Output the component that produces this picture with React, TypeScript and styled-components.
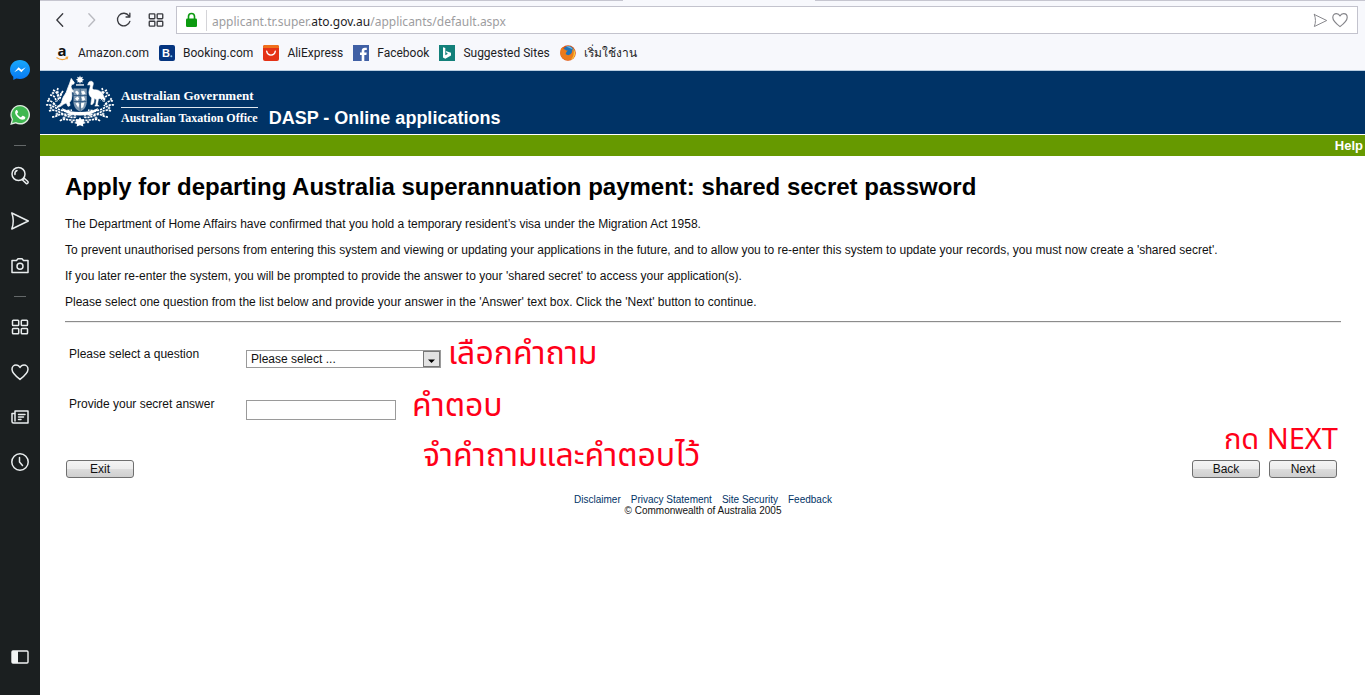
import React from 'react';
import styled, { createGlobalStyle } from 'styled-components';

const GlobalStyle = createGlobalStyle`
  *, *::before, *::after { box-sizing: border-box; }
  body { margin: 0; background: #fff; }
  h1, p { margin: 0; }
  a { color: inherit; text-decoration: none; }
  button { font: inherit; color: inherit; }
`;

const uiFont = `"Noto Sans", "Open Sans", sans-serif`;
const bookmarkFont = `Roboto, "Noto Sans", sans-serif`;
const pageFont = `"Liberation Sans", Arial, sans-serif`;

/* ---------- Frame ---------- */

const Frame = styled.div`
  display: flex;
  min-height: 100vh;
`;

const Sidebar = styled.nav`
  flex: 0 0 40px;
  display: flex;
  flex-direction: column;
  align-items: center;
  padding: 47px 0 16px;
  background: #1b1f20;
  color: #e9edee;
`;

const SideButton = styled.button<{ $last?: boolean }>`
  display: grid;
  place-items: center;
  width: 40px;
  height: 45px;
  padding: 0;
  border: 0;
  background: none;
  margin-top: ${(p) => (p.$last ? 'auto' : '0')};
  svg { display: block; }
`;

const SideDivider = styled.div`
  display: flex;
  align-items: center;
  height: 16px;
  &::before {
    content: '';
    width: 12px;
    height: 1px;
    background: #646869;
  }
`;

const Main = styled.div`
  flex: 1;
  min-width: 0;
`;

/* ---------- Browser bars ---------- */

const TabEdge = styled.div`
  display: flex;
  justify-content: space-between;
  height: 1px;
  background: #f7f8fc;
`;

const TabLine = styled.div<{ $width: string }>`
  width: ${(p) => p.$width};
  background: #c6c6d0;
`;

const Chrome = styled.header`
  background: #f7f8fc;
  border-bottom: 1px solid #b9cde0;
  font-family: ${uiFont};
  font-size: 12px;
  color: #1d1d1f;
`;

const Toolbar = styled.div`
  display: flex;
  align-items: center;
  padding: 5px 7px 0 4px;
`;

const ToolButton = styled.button<{ $dim?: boolean }>`
  display: grid;
  place-items: center;
  width: 32px;
  height: 28px;
  padding: 0;
  border: 0;
  background: none;
  color: ${(p) => (p.$dim ? '#b9bac0' : '#3a3b40')};
`;

const AddressBar = styled.div`
  flex: 1;
  display: flex;
  align-items: center;
  height: 28px;
  margin-left: 4px;
  padding: 0 7px 0 8px;
  background: #fff;
  border: 1px solid #c3c3cd;
`;

const Url = styled.div`
  flex: 1;
  margin-left: 8px;
  padding: 3px 0 0 5px;
  border-left: 1px solid #d4d4d8;
  line-height: 18px;
  color: #9d9da0;
  b { font-weight: 400; color: #1d1d1f; }
`;

const BarIcon = styled.button`
  display: grid;
  place-items: center;
  width: 20px;
  height: 20px;
  padding: 0;
  border: 0;
  background: none;
  color: #85858a;
`;

const Bookmarks = styled.div`
  display: flex;
  align-items: center;
  gap: 10px;
  height: 36px;
  padding: 2px 14px 0;
  font-family: ${bookmarkFont};
`;

const Bookmark = styled.a`
  display: flex;
  align-items: center;
  gap: 8px;
  line-height: 18px;
  white-space: nowrap;
  svg { display: block; flex: none; }
`;

/* ---------- Site ---------- */

const Banner = styled.div`
  display: flex;
  align-items: flex-start;
  height: 64px;
  padding: 4px 5px 0;
  background: #003366;
  border-bottom: 1px solid #fff;
  color: #fff;
`;

const Agency = styled.div`
  margin: 13px 0 0 6px;
  font: bold 13px/16px "Liberation Serif", "Times New Roman", serif;
  white-space: nowrap;
`;

const AgencyLine = styled.div<{ $ruled?: boolean }>`
  padding-bottom: ${(p) => (p.$ruled ? '3px' : '0')};
  border-bottom: ${(p) => (p.$ruled ? '1px solid #dfe8f0' : '0')};
  & + & { padding-top: 2px; font-size: 12px; }
`;

const AppName = styled.div`
  margin: 33px 0 0 11px;
  font: bold 18px/20px ${pageFont};
`;

const HelpBar = styled.div`
  display: flex;
  justify-content: flex-end;
  height: 21px;
  padding-right: 2px;
  background: #669900;
  color: #fff;
  font: bold 13px/21px ${pageFont};
`;

const Content = styled.main`
  padding: 17px 24px 0 25px;
  font: 12px/14px ${pageFont};
  color: #111;
`;

const Title = styled.h1`
  margin-bottom: 16px;
  font-size: 24px;
  line-height: 28px;
  color: #000;
`;

const Paragraph = styled.p`
  margin-bottom: 12px;
`;

const Rule = styled.hr`
  height: 2px;
  margin: 0 0 24px;
  border: 0;
  border-top: 1px solid #8c8c8c;
  border-bottom: 1px solid #ececec;
`;

const Field = styled.div`
  display: flex;
  align-items: flex-start;
  height: 50px;
  padding-left: 4px;
  label { flex: 0 0 177px; }
`;

const Control = styled.div`
  position: relative;
  display: flex;
  margin-top: 3px;
`;

const Select = styled.select`
  appearance: none;
  width: 195px;
  height: 18px;
  padding: 0 20px 0 4px;
  border: 1px solid #9a9a9a;
  border-radius: 0;
  background: #fff;
  font: 12px/16px ${pageFont};
  color: #111;
`;

const Arrow = styled.svg`
  position: absolute;
  top: 1px;
  right: 1px;
  pointer-events: none;
`;

const Answer = styled.input`
  width: 150px;
  height: 20px;
  padding: 0 4px;
  border: 1px solid #9a9a9a;
  font: 12px/16px ${pageFont};
`;

const noteFont = `"Noto Sans", "Noto Sans Thai", Tahoma, sans-serif`;

const Note = styled.span<{ $top: number; $left?: number; $right?: number; $small?: boolean }>`
  position: absolute;
  top: ${(p) => p.$top}px;
  ${(p) => (p.$left !== undefined ? `left: ${p.$left}px;` : '')}
  ${(p) => (p.$right !== undefined ? `right: ${p.$right}px;` : '')}
  font: ${(p) => (p.$small ? 29 : 32)}px/36px ${noteFont};
  color: #ff0019;
  white-space: nowrap;
`;

const Actions = styled.div`
  position: relative;
  display: flex;
  justify-content: space-between;
  margin-top: 13px;
  padding: 0 4px 0 1px;
`;

const ActionGroup = styled.div`
  display: flex;
  gap: 9px;
`;

const PushButton = styled.button`
  width: 68px;
  height: 18px;
  padding: 0;
  border: 1px solid #6f6f6f;
  border-radius: 3px;
  background: linear-gradient(#f4f4f4 0%, #ececec 48%, #dcdcdc 52%, #cfcfcf 100%);
  line-height: 16px;
`;

const Footer = styled.footer`
  margin-top: 16px;
  font-size: 10px;
  line-height: 11px;
  text-align: center;
`;

const FooterLinks = styled.div`
  display: flex;
  justify-content: center;
  gap: 10px;
  color: #003366;
`;

/* ---------- Icons ---------- */

type Glyph = { children: React.ReactNode; size?: number; stroke?: number };

const Line = ({ children, size = 20, stroke = 1.5 }: Glyph) => (
  <svg width={size} height={size} viewBox="0 0 20 20" fill="none" stroke="currentColor" strokeWidth={stroke} strokeLinecap="round" strokeLinejoin="round" aria-hidden="true">
    {children}
  </svg>
);

const heartPath = 'M10 17.4C6.4 14.6 2 11 2 7.2 2 4.8 3.8 3 6 3c1.700 0 3.200.9 4 2.500C10.800 3.900 12.300 3 14 3c2.200 0 4 1.800 4 4.200 0 3.800-4.400 7.400-8 10.200z';
const planePath = 'M1.800 2 18.300 10 1.800 18C3.800 12.500 3.800 7.500 1.800 2z';

const GridIcon = ({ size }: { size?: number }) => (
  <Line size={size}>
    <rect x="2.500" y="3.200" width="6.200" height="5.400" rx=".8" />
    <rect x="11.300" y="3.200" width="6.200" height="5.400" rx=".8" />
    <rect x="2.500" y="11.400" width="6.200" height="5.400" rx=".8" />
    <rect x="11.300" y="11.400" width="6.200" height="5.400" rx=".8" />
  </Line>
);

const Messenger = () => (
  <svg width="22" height="22" viewBox="0 0 22 22" aria-hidden="true">
    <defs>
      <linearGradient id="msg" x1="0" y1="0" x2="0" y2="1">
        <stop offset="0" stopColor="#18a8fb" />
        <stop offset="1" stopColor="#0878f4" />
      </linearGradient>
    </defs>
    <path d="M11 1C5.300 1 1 5.200 1 10.600c0 3 1.200 5.500 3.300 7.200V21l3-1.600c1.200.3 2.400.5 3.700.5 5.700 0 10-4.100 10-9.400S16.700 1 11 1z" fill="url(#msg)" />
    <path d="M5.200 13.300 9.600 8.300l2.800 2.500 4.300-2.500-4.300 5-2.800-2.500z" fill="#fff" />
  </svg>
);

const WhatsApp = () => (
  <svg width="22" height="22" viewBox="0 0 22 22" aria-hidden="true">
    <path d="M11.200 1A9.700 9.700 0 0 0 2.700 15.500L1.200 21l5.500-1.500A9.800 9.800 0 1 0 11.200 1z" fill="#dcebdd" />
    <path d="M11.200 2.300a8.400 8.400 0 0 0-7.100 13L3.100 19l3.900-1A8.400 8.400 0 1 0 11.200 2.300z" fill="#3fb750" />
    <path d="M8.200 6.200c-.4-.4-1-.3-1.400.2-1.300 1.500-.8 3.700 1.200 6 2 2.300 4.300 3.600 6.300 3.200 1.200-.2 2-1.100 2-2.200 0-.4-.2-.5-.5-.7l-1.800-.9c-.3-.1-.6-.1-.8.2l-.9 1.100c-.2.2-.5.2-.8.1-1.500-.7-2.600-1.800-3.300-3.200-.1-.3-.1-.5.1-.7l.7-.9c.2-.2.1-.5 0-.7z" fill="#fff" />
  </svg>
);

const Lock = () => (
  <svg width="13" height="16" viewBox="0 0 13 16" aria-hidden="true">
    <path d="M3.500 7V4.500a3 3 0 0 1 6 0V7" fill="none" stroke="#0c9a10" strokeWidth="1.600" />
    <rect x="1" y="6.500" width="11" height="8.500" rx="1.200" fill="#0c9a10" />
  </svg>
);

const AmazonMark = () => (
  <svg width="16" height="28" viewBox="0 -6 16 28" aria-hidden="true">
    <text x="8" y="11" textAnchor="middle" fontFamily="Open Sans" fontWeight="700" fontSize="15" fill="#111">a</text>
    <path d="M2.500 12.600c3.300 2.300 7.700 2.300 10.800.3M11.600 12.300l2-.1-.5 2" fill="none" stroke="#f0a33a" strokeWidth="1.200" />
  </svg>
);

const BookingMark = () => (
  <svg width="16" height="16" viewBox="0 0 16 16" aria-hidden="true">
    <rect width="16" height="16" rx="2" fill="#053580" />
    <text x="3" y="12" fontFamily="Liberation Sans" fontWeight="700" fontSize="11" fill="#fff">B</text>
    <circle cx="12.300" cy="11.200" r="1" fill="#7fc4ee" />
  </svg>
);

const AliMark = () => (
  <svg width="16" height="16" viewBox="0 0 16 16" aria-hidden="true">
    <rect width="16" height="16" rx="2" fill="#e43216" />
    <path d="M0 3V2a2 2 0 0 1 2-2h12a2 2 0 0 1 2 2v1z" fill="#f0701c" />
    <path d="M3.700 6.200c.8 5.200 7.800 5.200 8.600 0" fill="none" stroke="#fff" strokeWidth="1.400" strokeLinecap="round" />
  </svg>
);

const FacebookMark = () => (
  <svg width="16" height="16" viewBox="0 0 16 16" aria-hidden="true">
    <rect width="16" height="16" fill="#4060a5" />
    <path d="M8.700 16v-6H7V7.600h1.700V6c0-2.200 1.200-3.300 3.200-3.300h1.900V5h-1.300c-.9 0-1.200.4-1.200 1.200v1.400h2.400L13.400 10h-2.100v6z" fill="#fff" />
  </svg>
);

const BingMark = () => (
  <svg width="16" height="16" viewBox="0 0 16 16" aria-hidden="true">
    <rect width="16" height="16" fill="#13807a" />
    <path d="M4 2.200 6.300 3v7.300l2.700-1.500-1.400-.7-.9-2.200 5.300 1.900v2.700L6.300 13.800 4 12.500z" fill="#fff" />
  </svg>
);

const FirefoxMark = () => (
  <svg width="16" height="16" viewBox="0 0 16 16" aria-hidden="true">
    <circle cx="8" cy="8" r="7.800" fill="#df5413" />
    <circle cx="8.500" cy="6.800" r="5.700" fill="#1f73b8" />
    <path d="M6 1.500c3.500-1 6 .5 7 3l-3-1.300z" fill="#68b7df" />
    <path d="M1 3.500 3 2l.5 2c1 .1 2 .5 2.500 1.400L7.800 5.500 6.300 7.200 5.600 9c1.500 1.500 3.600 1.500 5.200.1C12 8 12.500 6 12 4c2.700 2.500 3.200 6.500.6 9.300C9 16.500 3 15.500 1 11c-1-2.500-.8-5 0-7.500z" fill="#ec7a1a" />
    <path d="M13 3.600c2.600 2.300 2.800 6.800.5 9.400-.8.9-2 1.600-3 1.900 3-2.400 4.200-6.500 2.500-11.300z" fill="#fbc738" />
  </svg>
);

const Spray = () => (
  <g>
    <g fill="none" stroke="#fff" strokeWidth="1.700" strokeDasharray="2.300 .9">
      <path d="M13 13c-2 5 3 8-1 13M8 15c3 1 5 4 5 8M5 20c4 0 6 3 6 7M2 26c4-1 7 2 9 5M18 16c-3 4-2 6-4 9" />
      <path d="M1 30c4-1 8 2 12 4s9 2 14 1M4 36c5-2 8 0 12 2s9 1 15 2M7 42c5 0 7-4 12-2s8 3 13 2M15 46c3-3 7-1 11-1s5 1 7 1" />
    </g>
    <g opacity=".8">
      <circle cx="8" cy="18" r="1.300" /><circle cx="4" cy="24" r="1.200" /><circle cx="16" cy="19" r="1.200" />
      <circle cx="9" cy="29" r="1.300" /><circle cx="6" cy="33" r="1.400" /><circle cx="12" cy="39" r="1.500" />
      <circle cx="19" cy="43" r="1.500" /><circle cx="25" cy="40" r="1.300" /><circle cx="20" cy="36" r="1.200" /><circle cx="27" cy="47" r="1.300" />
    </g>
  </g>
);

const Crest = () => (
  <svg width="70" height="52" viewBox="0 0 70 52" fill="#fff" stroke="none" aria-hidden="true">
    <path d="m35 0 .9 2.300 2.300-.9-.8 2.300 2.200 1-2.200 1 .8 2.200-2.300-.8L35 9.400l-.9-2.300-2.300.8.8-2.200-2.200-1 2.200-1-.8-2.300 2.300.9z" transform="translate(3.500 .5) scale(.9)" />
    <path d="M31 9.300h8v1.300h-8z" />
    <Spray />
    <g transform="translate(70 0) scale(-1 1)"><Spray /></g>
    {/* kangaroo */}
    <path d="M26.300 3.500 28 6l1.200 1.300-.3 1.600-2.300.6-.7 2.400 1.400 3 3 1.300-.5 1.200-3.200-.7.3 4-.7 4.200-1.800 2.600.6 3-2 .8-1.700-3.500-3 1.500c-2.200 2-4 2.800-6.300 3.200l.3-1.300c2.700-1 4-2.700 4.700-5.500.7-3.800 3-5.800 4.300-8.500l2.200-6 1-2.400z" stroke="#fff" strokeWidth=".8" />
    {/* emu */}
    <path d="M43.700 7.300c1-1.500 3.500-1.600 4.400.2.600 1.300 0 2.600-.5 4.300-.5 1.500 0 2.500 1.300 3 4.600-.8 8.600 2.300 10.400 7.800l.5 3-2.600-1.900-2.500-1.200-1.300 2-1 5.300 1.800 1.300h-4.400l1-1.600.6-4.700-2-1.500-.6 4.500-1.700 1.900-1.300-.3.9-6.500c-2.500-2-3.500-5-2.400-8 .6-2 1.300-3.500.8-5.200l-2.500.4z" stroke="#fff" strokeWidth=".5" />
    {/* shield */}
    <path d="M28.500 13.500h13.300v14c-.5 5-3.500 7.600-6.600 9.300-3.500-1.700-6.300-4.300-6.700-9.300z" fill="#7f99b2" />
    <path d="m30 17 2-1.500 2 2.500-1.500 2zM36 16.500l3-.8 1.500 3-2.800 1.100zM30 23.500l2.600-2 1.600 2-2 2.500zM36.300 22l2.600-.4 1.300 3-2.600 1.500zM30.500 28.500l2.500-1 1.300 2-1 3.300zM36 28.300l3.500-.8-1.300 4.700-2 1z" />
    <path d="M28 20.500h14M28.500 26.500h13M35.200 14v22" fill="none" stroke="#2c5580" strokeWidth=".8" />
    <path d="M17 33c5 3 11 4 18 4s13-1 18-4l-1 3C47 39 41 40.500 35 40.500S23 39 18 36z" />
    <path d="m35 42 1.300 2.300 3-.3-1 2.400 2.600 1.600-2.900.9.300 2.600-3.300-1.300-3.300 1.300.3-2.600-2.900-.9 2.600-1.600-1-2.400 3 .3z" />
  </svg>
);

/* ---------- Page ---------- */

const bookmarks = [
  { name: 'Amazon.com', icon: <AmazonMark /> },
  { name: 'Booking.com', icon: <BookingMark /> },
  { name: 'AliExpress', icon: <AliMark /> },
  { name: 'Facebook', icon: <FacebookMark /> },
  { name: 'Suggested Sites', icon: <BingMark /> },
  { name: 'เริ่มใช้งาน', icon: <FirefoxMark /> },
];

const paragraphs = [
  'The Department of Home Affairs have confirmed that you hold a temporary resident’s visa under the Migration Act 1958.',
  "To prevent unauthorised persons from entering this system and viewing or updating your applications in the future, and to allow you to re-enter this system to update your records, you must now create a 'shared secret'.",
  "If you later re-enter the system, you will be prompted to provide the answer to your 'shared secret' to access your application(s).",
  "Please select one question from the list below and provide your answer in the 'Answer' text box. Click the 'Next' button to continue.",
];

export default function App() {
  return (
    <Frame>
      <GlobalStyle />
      <Sidebar aria-label="Browser sidebar">
        <SideButton aria-label="Messenger"><Messenger /></SideButton>
        <SideButton aria-label="WhatsApp"><WhatsApp /></SideButton>
        <SideDivider />
        <SideButton aria-label="Search">
          <Line>
            <circle cx="8.500" cy="8" r="6.500" />
            <path d="M5 8.500a3.500 3.500 0 0 1 2-4M12.500 14l1.800-1.800 3.600 3.300c.9 1-.8 2.800-1.800 1.900z" />
          </Line>
        </SideButton>
        <SideButton aria-label="My Flow"><Line><path d={planePath} /></Line></SideButton>
        <SideButton aria-label="Snapshot">
          <Line>
            <path d="M2 4.500h4.500L8 2.700h4l1.500 1.800H18v12H2z" />
            <circle cx="10" cy="10.300" r="3" />
          </Line>
        </SideButton>
        <SideDivider />
        <SideButton aria-label="Speed Dial"><GridIcon /></SideButton>
        <SideButton aria-label="Bookmarks"><Line><path d={heartPath} /></Line></SideButton>
        <SideButton aria-label="News">
          <Line>
            <path d="M5 4h13v12H3.500c-1 0-1.500-.6-1.500-1.500V6.500h3zM5 6.500V14M8.500 7.500H15M8.500 10h5M8.500 12.500H11" />
          </Line>
        </SideButton>
        <SideButton aria-label="History">
          <Line>
            <circle cx="10" cy="10" r="8.200" />
            <path d="M9.500 5.500V10l3 3.500" />
          </Line>
        </SideButton>
        <SideButton $last aria-label="Toggle sidebar">
          <svg width="18" height="14" viewBox="0 0 18 14" aria-hidden="true">
            <rect x="1" y="1" width="16" height="12" rx="1" fill="none" stroke="#f2f4f4" strokeWidth="1.400" />
            <path d="M1 1h6v12H1z" fill="#f2f4f4" />
          </svg>
        </SideButton>
      </Sidebar>

      <Main>
        <Chrome>
          <TabEdge><TabLine $width="44%" /><TabLine $width="41.500%" /></TabEdge>
          <Toolbar>
            <ToolButton aria-label="Back"><Line size={18}><path d="M13 3 6.500 10l6.500 7" /></Line></ToolButton>
            <ToolButton $dim aria-label="Forward"><Line size={18}><path d="m6.500 3 6.500 7-6.500 7" /></Line></ToolButton>
            <ToolButton aria-label="Reload"><Line size={18}><path d="M15.500 5.500A7 7 0 1 0 16.500 11.500M16.500 2.500v4.200h-4.200" /></Line></ToolButton>
            <ToolButton aria-label="Speed dial"><GridIcon size={18} /></ToolButton>
            <AddressBar>
              <Lock />
              <Url>applicant.tr.super.<b>ato.gov.au</b>/applicants/default.aspx</Url>
              <BarIcon aria-label="Send to My Flow"><Line size={15} stroke={1.3}><path d={planePath} /></Line></BarIcon>
              <BarIcon aria-label="Add bookmark"><Line size={18} stroke={1.3}><path d={heartPath} /></Line></BarIcon>
            </AddressBar>
          </Toolbar>
          <Bookmarks>
            {bookmarks.map((b) => (
              <Bookmark href="#" key={b.name}>{b.icon}{b.name}</Bookmark>
            ))}
          </Bookmarks>
        </Chrome>

        <Banner>
          <Crest />
          <Agency>
            <AgencyLine $ruled>Australian Government</AgencyLine>
            <AgencyLine>Australian Taxation Office</AgencyLine>
          </Agency>
          <AppName>DASP - Online applications</AppName>
        </Banner>
        <HelpBar><a href="#">Help</a></HelpBar>

        <Content>
          <Title>Apply for departing Australia superannuation payment: shared secret password</Title>
          {paragraphs.map((t) => <Paragraph key={t}>{t}</Paragraph>)}
          <Rule />
          <Field>
            <label htmlFor="question">Please select a question</label>
            <Control>
              <Select id="question"><option>Please select ...</option></Select>
              <Arrow width="17" height="16" viewBox="0 0 17 16" aria-hidden="true">
                <rect x=".5" y=".5" width="16" height="15" fill="#e3e3e3" stroke="#777" />
                <path d="M5 8.500h7L8.500 12z" fill="#000" />
              </Arrow>
              <Note $top={-16} $left={202}>เลือกคำถาม</Note>
            </Control>
          </Field>
          <Field>
            <label htmlFor="answer">Provide your secret answer</label>
            <Control>
              <Answer id="answer" type="text" />
              <Note $top={-14} $left={166}>คำตอบ</Note>
            </Control>
          </Field>
          <Actions>
            <PushButton type="button">Exit</PushButton>
            <Note $top={-24} $left={358}>จำคำถามและคำตอบไว้</Note>
            <ActionGroup>
              <PushButton type="button">Back</PushButton>
              <PushButton type="button">Next</PushButton>
            </ActionGroup>
            <Note $small $top={-40} $right={3}>กด NEXT</Note>
          </Actions>
          <Footer>
            <FooterLinks>
              <a href="#">Disclaimer</a>
              <a href="#">Privacy Statement</a>
              <a href="#">Site Security</a>
              <a href="#">Feedback</a>
            </FooterLinks>
            <div>© Commonwealth of Australia 2005</div>
          </Footer>
        </Content>
      </Main>
    </Frame>
  );
}
